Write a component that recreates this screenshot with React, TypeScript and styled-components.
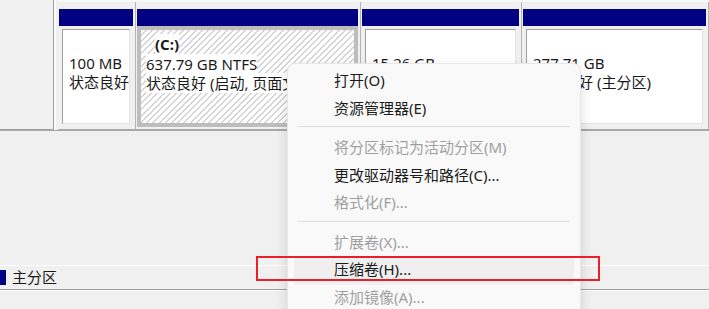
import React from 'react';
import styled, { createGlobalStyle } from 'styled-components';

const GlobalStyle = createGlobalStyle`
  html, body {
    margin: 0;
    padding: 0;
    background: #f0f0f0;
    overflow: hidden;
  }
  * {
    box-sizing: border-box;
  }
`;

const FONT = `"Noto Sans", "Noto Sans CJK SC", sans-serif`;

// 页面外框
const Screen = styled.div`
  position: relative;
  width: 709px;
  height: 309px;
  display: flex;
  flex-direction: column;
  overflow: hidden;
  background: #f0f0f0;
  font-family: ${FONT};
  font-size: 15px;
  color: #1a1a1a;
`;

const DiskRow = styled.div`
  display: flex;
  height: 131px;
  border-bottom: 1px solid #a8a8a8;
  flex-shrink: 0;
`;

const DiskInfo = styled.div`
  width: 54px;
  flex-shrink: 0;
  background: #f0f0f0;
  border-right: 1px solid #a0a0a0;
  border-bottom: 1px solid #a0a0a0;
  box-shadow: 2px 0 0 #fafafa;
`;

const Volumes = styled.div`
  display: flex;
  flex: 1;
  margin-left: 4px;
  min-width: 0;
  border-top: 2px solid #f8f8f8;
`;

const Volume = styled.div<{ $w?: number }>`
  ${(p) => (p.$w ? `width: ${p.$w}px; flex-shrink: 0;` : 'flex: 1; min-width: 0;')}
  display: flex;
  flex-direction: column;
  padding: 7px 2px 2px 1px;
  border-right: 1px solid #b4b4b4;
  height: 128px;
  border-bottom: 1px solid #a8a8a8;
`;

const NavyBar = styled.div`
  height: 17px;
  background: #000080;
  flex-shrink: 0;
`;

const Frame = styled.div<{ $selected?: boolean }>`
  flex: 1;
  display: flex;
  padding: ${(p) => (p.$selected ? '4px' : '3px')};
  background: ${(p) => (p.$selected ? '#bdbdbd' : 'transparent')};
  min-width: 0;
`;

const Box = styled.div<{ $selected?: boolean }>`
  flex: 1;
  min-width: 0;
  overflow: hidden;
  white-space: nowrap;
  padding: ${(p) => (p.$selected ? '5px 5px 4px' : '4px 6px 3px')};
  border-top: ${(p) => (p.$selected ? 'none' : '1px solid #a0a0a0')};
  border-left: ${(p) => (p.$selected ? 'none' : '1px solid #a0a0a0')};
  border-bottom: ${(p) => (p.$selected ? 'none' : '1px solid #e3e3e3')};
  border-right: ${(p) => (p.$selected ? 'none' : '1px solid #e3e3e3')};
  background: ${(p) =>
    p.$selected
      ? 'repeating-linear-gradient(135deg, #ffffff 0 3px, #d4d4d4 3px 4.4px)'
      : '#ffffff'};
`;

const Line = styled.div<{ $bold?: boolean; $indent?: number }>`
  height: 19.5px;
  line-height: 19.5px;
  font-weight: ${(p) => (p.$bold ? 700 : 400)};
  padding-left: ${(p) => p.$indent || 0}px;

  span {
    background: #ffffff;
  }
`;

const Spacer = styled.div`
  flex: 1;
`;

const Legend = styled.div`
  height: 25px;
  flex-shrink: 0;
  display: flex;
  align-items: center;
  gap: 6px;
  border-top: 1px solid #ffffff;
  border-bottom: 1px solid #a0a0a0;
  box-shadow: 0 1px 0 #fbfbfb;
`;

const Swatch = styled.div`
  width: 6px;
  height: 15px;
  background: #000080;
`;

const LegendText = styled.span`
  line-height: 20px;
  padding-bottom: 2px;
`;

const Bottom = styled.div`
  height: 19px;
  flex-shrink: 0;
`;

// 右键菜单
const Menu = styled.div`
  position: absolute;
  left: 287px;
  top: 63px;
  width: 294px;
  height: 270px;
  padding: 4px 6px;
  background: #f9f9f9;
  border: 1px solid rgba(0, 0, 0, 0.07);
  border-radius: 8px;
  box-shadow: 0 6px 14px rgba(0, 0, 0, 0.13);
  display: flex;
  flex-direction: column;
`;

const MenuItem = styled.div<{ $disabled?: boolean; $active?: boolean }>`
  height: 27.5px;
  flex-shrink: 0;
  display: flex;
  align-items: center;
  padding: 0 0 4px 40px;
  border-radius: 4px;
  color: ${(p) => (p.$disabled ? '#a0a0a0' : '#1b1b1b')};
  background: ${(p) => (p.$active ? '#efefef' : 'transparent')};
  white-space: nowrap;
`;

const Separator = styled.div`
  height: 1px;
  flex-shrink: 0;
  margin: 3px 4px 8px;
  background: #dedede;
`;

const Callout = styled.div`
  position: absolute;
  left: 256px;
  top: 256px;
  width: 344px;
  height: 25px;
  border: 2px solid #e8202a;
`;

const App = () => {
  return (
    <>
      <GlobalStyle />
      <Screen>
        <DiskRow>
          <DiskInfo />
          <Volumes>
            <Volume $w={78}>
              <NavyBar />
              <Frame>
                <Box>
                  <Line />
                  <Line><span>100 MB</span></Line>
                  <Line><span>状态良好</span></Line>
                </Box>
              </Frame>
            </Volume>
            <Volume $w={225}>
              <NavyBar />
              <Frame $selected>
                <Box $selected>
                  <Line $bold $indent={9}><span>(C:)</span></Line>
                  <Line><span>637.79 GB NTFS</span></Line>
                  <Line><span>状态良好 (启动, 页面文件, 故障转储, 基本数据分区)</span></Line>
                </Box>
              </Frame>
            </Volume>
            <Volume $w={161}>
              <NavyBar />
              <Frame>
                <Box>
                  <Line />
                  <Line><span>15.26 GB</span></Line>
                  <Line><span>状态良好 (恢复分区)</span></Line>
                </Box>
              </Frame>
            </Volume>
            <Volume>
              <NavyBar />
              <Frame>
                <Box>
                  <Line />
                  <Line><span>277.71 GB</span></Line>
                  <Line><span>状态良好 (主分区)</span></Line>
                </Box>
              </Frame>
            </Volume>
          </Volumes>
        </DiskRow>
        <Spacer />
        <Legend>
          <Swatch />
          <LegendText>主分区</LegendText>
        </Legend>
        <Bottom />

        <Menu>
          <MenuItem>打开(O)</MenuItem>
          <MenuItem>资源管理器(E)</MenuItem>
          <Separator />
          <MenuItem $disabled>将分区标记为活动分区(M)</MenuItem>
          <MenuItem>更改驱动器号和路径(C)...</MenuItem>
          <MenuItem $disabled>格式化(F)...</MenuItem>
          <Separator />
          <MenuItem $disabled>扩展卷(X)...</MenuItem>
          <MenuItem $active>压缩卷(H)...</MenuItem>
          <MenuItem $disabled>添加镜像(A)...</MenuItem>
        </Menu>
        <Callout />
      </Screen>
    </>
  );
};

export default App;
